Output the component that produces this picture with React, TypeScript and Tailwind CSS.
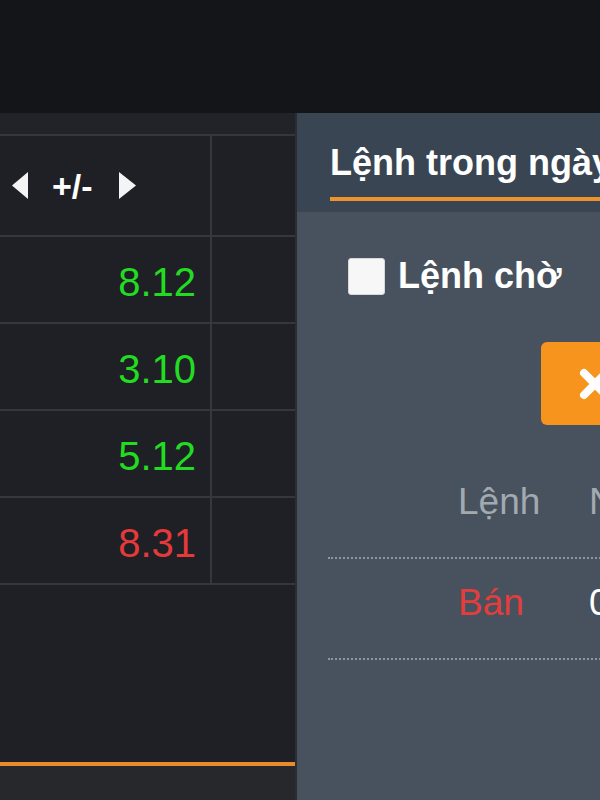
import React from "react";

const rows = [
  { v: "8.12", c: "text-[#22dc22]" },
  { v: "3.10", c: "text-[#22dc22]" },
  { v: "5.12", c: "text-[#22dc22]" },
  { v: "8.31", c: "text-[#e63a3a]" },
];

export default function App() {
  return (
    <div className="w-[600px] h-[800px] flex flex-col bg-[#141518] overflow-hidden font-['Liberation_Sans',Arial,sans-serif]">
      <div className="h-[113px] shrink-0 bg-[#141518]" />
      <div className="flex flex-1 min-h-0">
        {/* Left panel */}
        <div className="w-[297px] shrink-0 flex flex-col bg-[#1f2025] border-r-2 border-[#2c2d32]">
          <div className="h-[23px] shrink-0 bg-[#222329] border-b-2 border-[#36373c]" />
          <div className="h-[101px] shrink-0 flex border-b-2 border-[#36373c]">
            <div className="w-[212px] shrink-0 border-r-2 border-[#36373c] flex items-center pl-[12px]">
              <svg width="16" height="27" viewBox="0 0 16 27" className="shrink-0">
                <polygon points="16,0 16,27 0,13.5" fill="#f4f4f6" />
              </svg>
              <span className="ml-[24px] text-[34px] leading-[40px] font-bold text-white whitespace-nowrap">+/-</span>
              <svg width="17" height="27" viewBox="0 0 17 27" className="ml-[26px] shrink-0">
                <polygon points="0,0 0,27 17,13.5" fill="#f4f4f6" />
              </svg>
            </div>
            <div className="flex-1" />
          </div>
          {rows.map((r) => (
            <div key={r.v} className="h-[87px] shrink-0 flex border-b-2 border-[#36373c]">
              <div className="w-[212px] shrink-0 border-r-2 border-[#36373c] flex items-center justify-end pr-[14px] pt-[4px]">
                <span className={`text-[40px] leading-[46px] ${r.c}`}>{r.v}</span>
              </div>
              <div className="flex-1" />
            </div>
          ))}
          <div className="flex-1" />
          <div className="h-[4px] shrink-0 bg-[#e98b2c]" />
          <div className="h-[34px] shrink-0 bg-[#27282c]" />
        </div>

        {/* Right panel */}
        <div className="flex-1 min-w-0 flex flex-col bg-[#47525e] overflow-hidden">
          <div className="h-[99px] shrink-0 bg-[#3a4553] pl-[33px] pt-[30px]">
            <div className="inline-block whitespace-nowrap text-[36px] leading-[40px] font-bold text-white pb-[14px] border-b-4 border-[#f0922b]">
              Lệnh trong ngày
            </div>
          </div>
          <div className="pt-[44px] pl-[51px]">
            <div className="flex items-center h-[40px] whitespace-nowrap">
              <div className="w-[37px] h-[37px] bg-[#f7f7f7] rounded-[3px] border border-[#d8d8d8] shrink-0" />
              <span className="ml-[13px] text-[36px] leading-[40px] font-bold text-white">Lệnh chờ</span>
            </div>
          </div>
          <div className="mt-[46px] ml-[244px] flex">
            <div className="w-[160px] h-[83px] shrink-0 rounded-[6px] bg-[#f7941e] flex items-center pl-[37px]">
              <svg width="34" height="34" viewBox="0 0 34 34" className="shrink-0">
                <path d="M6 6 L28 28 M28 6 L6 28" stroke="#ffffff" strokeWidth="8" strokeLinecap="round" />
              </svg>
            </div>
          </div>
          <div className="mt-[33px] ml-[31px] w-[500px] shrink-0">
            <div className="flex pt-[24px] pb-[35px] border-b-2 border-dotted border-[#8f959d] whitespace-nowrap">
              <div className="w-[130px] shrink-0" />
              <div className="w-[131px] shrink-0 text-[37px] leading-[40px] text-[#a3a9b0]">Lệnh</div>
              <div className="text-[37px] leading-[40px] text-[#a3a9b0]">Ngày</div>
            </div>
            <div className="flex pt-[24px] pb-[35px] border-b-2 border-dotted border-[#8f959d] whitespace-nowrap">
              <div className="w-[130px] shrink-0" />
              <div className="w-[131px] shrink-0 text-[37px] leading-[40px] text-[#e53c3c]">Bán</div>
              <div className="text-[37px] leading-[40px] text-white">09:15</div>
            </div>
          </div>
        </div>
      </div>
    </div>
  );
}
